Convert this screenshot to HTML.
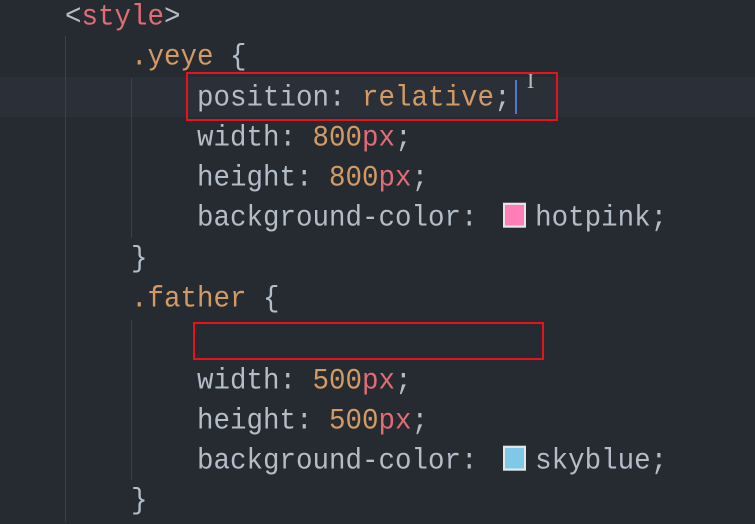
<!DOCTYPE html>
<html><head><style>
html,body{margin:0;padding:0;}
body{width:755px;height:522px;background:#262a31;overflow:hidden;position:relative;font-family:"Liberation Mono",monospace;font-size:27.5px;}
.l{position:absolute;left:0;height:40.3px;line-height:40.3px;white-space:pre;color:#b3bdc8;margin-top:2px;transform:scaleY(1.08);transform-origin:0 50%;}
.hl{position:absolute;left:0;top:77px;width:755px;height:40px;background:#2b3038;}
.g{position:absolute;width:1px;background:#3b414b;}
.r{color:#e06c75}.o{color:#d19a66}.p{color:#b3bdc8}
.box{position:absolute;border:2.5px solid #e8121d;box-sizing:border-box;}
.sw{display:inline-block;width:19px;height:19px;border:2px solid #e6e6e6;vertical-align:-2px;margin:0 9px 0 9px;}
</style></head><body>
<div class="hl"></div>
<div class="g" style="left:65px;top:36px;height:486px"></div>
<div class="g" style="left:131px;top:78px;height:160px"></div>
<div class="g" style="left:131px;top:320px;height:160px"></div>
<div class="l" style="top:-4px;left:65px">&lt;<span class="r">style</span>&gt;</div>
<div class="l" style="top:36px;left:131px"><span class="o">.yeye</span> {</div>
<div class="l" style="top:77px;left:197px">position: <span class="o">relative</span>;</div>
<div style="position:absolute;left:515px;top:80px;width:2px;height:34px;background:#4d78cc"></div>
<div style="position:absolute;left:527px;top:68px;color:#bbb;font-size:22px;font-family:'Liberation Serif',serif">I</div>
<div class="l" style="top:117px;left:197px">width: <span class="o">800</span><span class="r">px</span>;</div>
<div class="l" style="top:157px;left:197px">height: <span class="o">800</span><span class="r">px</span>;</div>
<div class="l" style="top:197px;left:197px">background-color: <span class="sw" style="background:#ff7eb6"></span>hotpink;</div>
<div class="l" style="top:238px;left:131px">}</div>
<div class="l" style="top:278px;left:131px"><span class="o">.father</span> {</div>
<div class="l" style="top:360px;left:197px">width: <span class="o">500</span><span class="r">px</span>;</div>
<div class="l" style="top:400px;left:197px">height: <span class="o">500</span><span class="r">px</span>;</div>
<div class="l" style="top:440px;left:197px">background-color: <span class="sw" style="background:#7ec8e8"></span>skyblue;</div>
<div class="l" style="top:480px;left:131px">}</div>
<div class="box" style="left:186px;top:72px;width:372px;height:49px"></div>
<div class="box" style="left:193px;top:322px;width:351px;height:38px"></div>
</body></html>
